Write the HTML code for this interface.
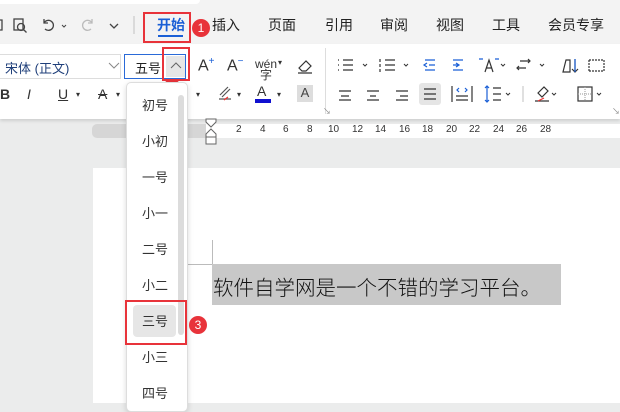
<!DOCTYPE html>
<html><head><meta charset="utf-8"><style>
*{margin:0;padding:0;box-sizing:border-box}
body{width:620px;height:403px;overflow:hidden;background:#ebecec;font-family:"Liberation Sans","Noto Sans CJK SC",sans-serif;position:relative;color:#222}
.a{position:absolute}
.tab{position:absolute;top:15px;font-size:14px;color:#222}
.rb{position:absolute;left:0;top:44px;width:620px;height:75px;background:#fff;box-shadow:0 2px 3px rgba(0,0,0,.12)}
.ic{position:absolute;font-size:14px;color:#333}
.red{position:absolute;border:2px solid #e8333a}
.bd{position:absolute;width:18px;height:18px;border-radius:50%;background:#e8333a;color:#fff;font-size:12px;text-align:center;line-height:18px}
.it{position:absolute;left:0;width:56px;text-align:center;font-size:13px;color:#333}
.rn{position:absolute;top:124px;font-size:10px;color:#333}
</style></head><body>
<div class="a" style="left:0;top:0;width:620px;height:44px;background:#f3f3f3"></div>
<div class="a" style="left:0;top:0;width:200px;height:4px;background:#fff;border-radius:0 0 6px 0"></div>
<svg class="a" style="left:0;top:14px" width="140" height="22" viewBox="0 0 140 22" fill="none" stroke="#444" stroke-width="1.3">
<path d="M0 6h2v10H0"/>
<rect x="14" y="5" width="9" height="11"/><circle cx="21" cy="13" r="3.5"/><path d="M23.5 15.5l3 3"/>
<path d="M44 9a5 5 0 1 1 1 6M44 5v4h4"/><path d="M62 11l2 2 2-2" stroke-width="1"/>
<path d="M92 9a5 5 0 1 0-1 6M92 5v4h-4" stroke="#bbb"/><path d="M110 10l4 4 4-4"/>
<path d="M134 2v18" stroke="#ccc"/>
</svg>
<div class="tab" style="left:157px;color:#1a5fd6;font-weight:bold">开始</div>
<div class="a" style="left:158px;top:35px;width:25px;height:2px;background:#1a5fd6"></div>
<div class="tab" style="left:212px">插入</div>
<div class="tab" style="left:268px">页面</div>
<div class="tab" style="left:325px">引用</div>
<div class="tab" style="left:380px">审阅</div>
<div class="tab" style="left:436px">视图</div>
<div class="tab" style="left:492px">工具</div>
<div class="tab" style="left:548px">会员专享</div>
<div class="red" style="left:143px;top:12px;width:48px;height:31px"></div>
<div class="bd" style="left:192px;top:19px">1</div>

<div class="rb"></div>
<div class="a" style="left:0;top:54px;width:121px;height:25px;border:1px solid #ddd;border-left:none;background:#fff"></div>
<div class="a" style="left:5px;top:58px;font-size:13px;color:#1f3f7a">宋体 (正文)</div>
<svg class="a" style="left:108px;top:62px" width="12" height="8"><path d="M1 1l5 5 5-5" stroke="#888" fill="none"/></svg>
<div class="a" style="left:124px;top:54px;width:62px;height:25px;border:1px solid #2a6ad8;background:#fff"></div>
<div class="a" style="left:135px;top:58px;font-size:13px">五号</div>
<div class="a" style="left:166px;top:56px;width:19px;height:21px;background:#e6e6e6"></div>
<svg class="a" style="left:170px;top:62px" width="12" height="8"><path d="M1 6l5-5 5 5" stroke="#666" fill="none"/></svg>
<div class="red" style="left:162px;top:47px;width:28px;height:34px"></div>
<div class="bd" style="left:163px;top:79px">2</div>

<div class="ic" style="left:198px;top:56px;font-size:16px">A<sup style="font-size:10px;color:#1a5fd6">+</sup></div>
<div class="ic" style="left:227px;top:56px;font-size:16px">A<sup style="font-size:10px;color:#1a5fd6">−</sup></div>
<div class="ic" style="left:255px;top:57px;font-size:12px">wén<br></div>
<div class="ic" style="left:260px;top:66px;font-size:12px">字</div>
<div class="ic" style="left:278px;top:58px;font-size:8px">▾</div>
<svg class="a" style="left:296px;top:57px" width="18" height="18" fill="none" stroke="#333" stroke-width="1.2"><path d="M3 11l7-7 5 5-5 5H6zM2 16h14"/></svg>
<div class="a" style="left:325px;top:48px;width:1px;height:66px;background:#ddd"></div>
<div class="ic" style="left:0;top:86px;font-size:14px;font-weight:bold">B</div>
<div class="ic" style="left:27px;top:86px;font-style:italic">I</div>
<div class="ic" style="left:58px;top:86px;text-decoration:underline">U</div>
<div class="ic" style="left:76px;top:90px;font-size:8px">▾</div>
<div class="ic" style="left:98px;top:86px;text-decoration:line-through">A</div>
<div class="ic" style="left:116px;top:90px;font-size:8px">▾</div>
<div class="ic" style="left:196px;top:90px;font-size:8px">▾</div>
<svg class="a" style="left:216px;top:83px" width="20" height="20" fill="none" stroke="#555" stroke-width="1.2"><path d="M4 12l8-8M6 14l8-8M3 16h12"/><path d="M8 17l4-3" stroke="#e33"/></svg>
<div class="ic" style="left:237px;top:90px;font-size:8px">▾</div>
<div class="ic" style="left:257px;top:83px">A</div>
<div class="a" style="left:255px;top:99px;width:16px;height:4px;background:#1010d0"></div>
<div class="ic" style="left:277px;top:90px;font-size:8px">▾</div>
<div class="a" style="left:297px;top:85px;width:16px;height:17px;background:#ddd;font-size:13px;text-align:center;color:#444">A</div>
<svg class="a" style="left:335px;top:55px" width="285" height="50" fill="none" stroke="#333" stroke-width="1.2">
<path d="M8 5h10M8 10h10M8 15h10M3 5h1M3 10h1M3 15h1"/><path d="M28 9l2 2 2-2" stroke-width="1"/>
<path d="M50 5h10M50 10h10M50 15h10M45 4v3M45 9v3M45 14v3"/><path d="M69 9l2 2 2-2" stroke-width="1"/>
<path d="M90 5h10M94 10h6M90 15h10M92 8l-3 2 3 2" stroke="#1a5fd6"/>
<path d="M118 5h10M118 10h6M118 15h10M121 8l3 2-3 2" stroke="#1a5fd6"/>
<path d="M150 17l4-12 4 12M151 13h6"/><path d="M144 4h4M160 4h4" stroke="#1a5fd6"/><path d="M166 9l2 2 2-2" stroke-width="1"/>
<path d="M185 6h10M191 13h-9M193 4l2 2-2 2M184 11l-2 2 2 2"/><path d="M205 9l2 2 2-2" stroke-width="1"/>
<path d="M228 17l3-12h4v12zM240 4v13M237 14l3 3 3-3" /><path d="M240 4v13" stroke="#1a5fd6"/>
<path d="M254 5h15M254 16h15M254 5v11M269 5v11" stroke-dasharray="2 1"/>
<path d="M4 36h12M6 41h8M4 45h12"/>
<path d="M32 36h12M35 41h6M32 45h12"/>
<path d="M61 36h12M65 41h8M61 45h12"/>
<rect x="84" y="28" width="22" height="22" rx="3" fill="#e5e5e5" stroke="none"/>
<path d="M89 34h12M89 39h12M89 44h12"/>
<path d="M117 31v16M137 31v16M121 41h12M121 45h12"/><path d="M124 33l-2 2 2 2M130 33l2 2-2 2" stroke="#1a5fd6"/>
<path d="M152 31v16M150 33l2-2 2 2M150 45l2 2 2-2" stroke="#1a5fd6"/><path d="M158 33h8M158 39h8M158 45h8"/><path d="M171 38l2 2 2-2" stroke-width="1"/>
<path d="M188 31v16" stroke="#ccc"/>
<path d="M203 38l6-6 4 4-6 6zM200 46h14"/><path d="M203 46l6-3" stroke="#e33"/><path d="M217 38l2 2 2-2" stroke-width="1"/>
<rect x="243" y="32" width="14" height="14"/><path d="M250 32v14M243 39h14" stroke-dasharray="1 1" stroke="#aaa"/><path d="M262 38l2 2 2-2" stroke-width="1"/>
</svg>
<div class="a" style="left:323px;top:106px;font-size:8px;color:#888">↘</div>
<div class="a" style="left:612px;top:106px;font-size:8px;color:#888">↘</div>

<div class="a" style="left:92px;top:124px;width:114px;height:14px;background:#d6d6d6;border-radius:5px 0 0 5px"></div>
<div class="a" style="left:206px;top:124px;width:414px;height:14px;background:#fff"></div>
<span class="rn" style="left:236px">2</span><span class="rn" style="left:260px">4</span><span class="rn" style="left:283px">6</span><span class="rn" style="left:307px">8</span><span class="rn" style="left:328px">10</span><span class="rn" style="left:352px">12</span><span class="rn" style="left:375px">14</span><span class="rn" style="left:399px">16</span><span class="rn" style="left:422px">18</span><span class="rn" style="left:446px">20</span><span class="rn" style="left:469px">22</span><span class="rn" style="left:493px">24</span><span class="rn" style="left:516px">26</span><span class="rn" style="left:540px">28</span>
<svg class="a" style="left:204px;top:118px" width="14" height="28" fill="#fff" stroke="#666"><path d="M2 1h10v3l-5 5-5-5z"/><path d="M7 11l5 5v3H2v-3z"/><rect x="2" y="19" width="10" height="7"/></svg>

<div class="a" style="left:93px;top:168px;width:527px;height:235px;background:#fff"></div>
<div class="a" style="left:212px;top:240px;width:1px;height:24px;background:#bbb"></div>
<div class="a" style="left:188px;top:264px;width:24px;height:1px;background:#bbb"></div>
<div class="a" style="left:212px;top:264px;width:349px;height:41px;background:#c8c8c8"></div>
<div class="a" style="left:213px;top:271px;font-size:20.5px;font-family:'Noto Sans CJK SC',sans-serif;color:#111;white-space:nowrap;font-weight:300">软件自学网是一个不错的学习平台。</div>

<div class="a" style="left:126px;top:82px;width:62px;height:330px;background:#fff;border:1px solid #ddd;border-radius:5px;box-shadow:0 2px 6px rgba(0,0,0,.15)">
<div class="a" style="left:51px;top:12px;width:6px;height:240px;background:#dcdcdc;border-radius:3px"></div>
<div class="a" style="left:6px;top:222px;width:43px;height:32px;background:#e6e6e6;border-radius:4px"></div>
<div class="it" style="top:12px">初号</div>
<div class="it" style="top:48px">小初</div>
<div class="it" style="top:84px">一号</div>
<div class="it" style="top:120px">小一</div>
<div class="it" style="top:156px">二号</div>
<div class="it" style="top:192px">小二</div>
<div class="it" style="top:228px">三号</div>
<div class="it" style="top:264px">小三</div>
<div class="it" style="top:300px">四号</div>
</div>
<div class="red" style="left:125px;top:300px;width:62px;height:45px"></div>
<div class="bd" style="left:189px;top:316px">3</div>
</body></html>
